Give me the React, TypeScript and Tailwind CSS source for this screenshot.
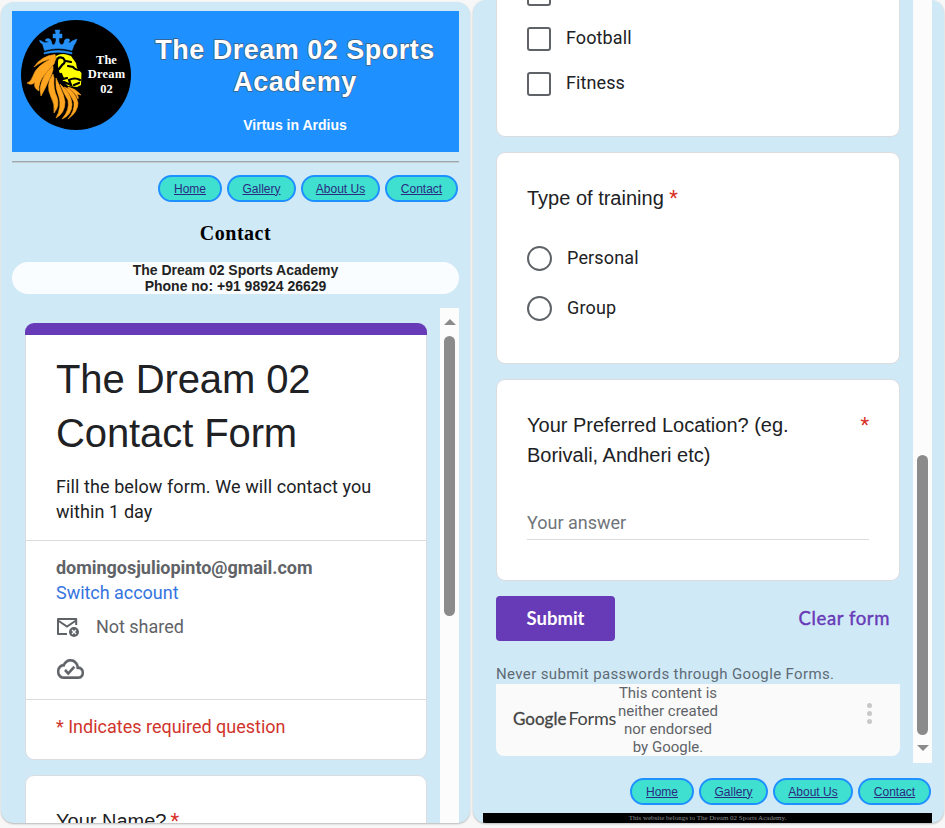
import React from "react";

const ARIAL = "font-['Liberation_Sans',Arial,sans-serif]";

function Logo() {
  return (
    <svg width="110" height="110" viewBox="0 0 110 110" className="block shrink-0">
      <circle cx="55" cy="55" r="55" fill="#000" />
      <g fill="#2490f8" stroke="#2490f8" strokeWidth="0.500">
        <path d="M23.500 30.500 L21.500 24 Q19 23 18.500 20.500 Q20 20 22 22 Q26 24 28 21 Q23 22 25 19 Q30 17 31 24 Q33 27 35 21 L35 18 L32 18 L32 14 L35 14 L34 10 L39 10 L38 14 L41 14 L41 18 L38 18 L38 22 Q40 27 43 23 Q43 18 48 19 Q50 21 47 22 Q49 24 51 21 L56 19 Q55 23 53 25 L51 30.500 Q37 26.500 23.500 30.500 Z" />
        <path d="M23 32.500 Q37 28.500 51 32.500 L51 34 Q37 30.500 23 34 Z" />
      </g>
      <g fill="#ffa51f" stroke="#ffa51f" strokeWidth="0.600">
        <path d="M34 34.500 Q20 36 13 47 Q22 40 30 39 Q15 46 12 56 Q10 62 6 63 Q11 66 14 62 Q12 68 18 71 Q17 62 24 54 Q29 48 33 44 L35 38 Z" />
        <path d="M32 46 Q23 54 21 61 Q18 68 20 76 Q25 67 28 60 Q31 54 32 50 Z" />
        <path d="M32 54 Q24 65 30 77 Q34 84 33 93 Q39 86 36 77 Q32 69 33 58 Z" />
        <path d="M35 58 Q34 68 38 77 Q41 87 35 98 Q44 93 44 82 Q43 75 40 69 Z" />
        <path d="M39 64 Q43 74 47 80 Q49 90 41 99 Q51 95 51 84 Q50 75 44 69 Z" />
        <path d="M43 67 Q50 75 53 82 Q54 91 47 99 Q57 92 57 83 Q55 74 48 69 Z" />
        <path d="M47 68 Q55 73 57 79 Q58 77 56 74 L60 75 Q54 68 47 67 Z" />
      </g>
      <path d="M35 36 Q41 32 50 36 L55 43 L56 48 L60.500 53 L60 65 L56 67 L47 66 L42 61 L38 51 Z" fill="#ff0" />
      <g fill="none" stroke="#000" strokeWidth="2.200" strokeLinecap="round">
        <path d="M36 45 Q35 35 42 38 Q46 42 41 45 L38 49" />
        <path d="M45 41 L50 42 M47 46 L52 47 Q54 50 59 50 M40 54 L42 59 L46 58 M43 62 L50 65 L48 60 Q54 57 59 60 M53 65 L58 63" />
      </g>
      <g fill="#fff" textAnchor="middle" fontFamily="'Liberation Serif', serif" fontWeight="700" fontSize="12.500">
        <text x="85.500" y="43.500">The</text>
        <text x="85.500" y="58" textLength="37.500">Dream</text>
        <text x="85.500" y="73">02</text>
      </g>
    </svg>
  );
}

function Nav({ about }: { about: string }) {
  const pill =
    "flex h-[27px] items-center justify-center rounded-full border-2 border-[#1e90ff] bg-[#40e0d0] text-[12px] leading-none text-[#2b2b80] underline";
  return (
    <nav className={`flex gap-[5px] ${ARIAL}`}>
      <a className={`${pill} w-[64px]`}>Home</a>
      <a className={`${pill} w-[69px]`}>Gallery</a>
      <a className={`${pill} ${about}`}>About Us</a>
      <a className={`${pill} w-[73px]`}>Contact</a>
    </nav>
  );
}

function MailOff() {
  return (
    <svg width="24" height="20" viewBox="0 0 24 20" className="block shrink-0">
      <path d="M11 17H2V1.900H20.200V8" fill="none" stroke="#5f6368" strokeWidth="2" strokeLinejoin="round" />
      <path d="M2 3.500L11 9.500L20 3.500" fill="none" stroke="#5f6368" strokeWidth="2" />
      <circle cx="18" cy="15" r="5" fill="#5f6368" />
      <path d="M16 13L20 17M20 13L16 17" stroke="#fff" strokeWidth="1.300" />
    </svg>
  );
}

function CloudDone() {
  return (
    <svg width="27" height="20" viewBox="0 4 24 16" preserveAspectRatio="none" className="block">
      <path
        fill="#5f6368"
        stroke="#5f6368"
        strokeWidth="0.300"
        d="M19.350 10.040C18.670 6.590 15.640 4 12 4 9.110 4 6.600 5.640 5.350 8.040 2.340 8.360 0 10.910 0 14c0 3.310 2.690 6 6 6h13c2.760 0 5-2.240 5-5 0-2.640-2.050-4.780-4.650-4.960zM19 18H6c-2.210 0-4-1.790-4-4s1.790-4 4-4h.71C7.370 7.690 9.480 6 12 6c3.040 0 5.500 2.460 5.500 5.500v.5H19c1.660 0 3 1.340 3 3s-1.340 3-3 3zm-9-3.820l-2.090-2.090L6.500 13.500 10 17l6.010-6.010-1.410-1.410z"
      />
    </svg>
  );
}

function LeftPhone() {
  return (
    <section className="mt-[2px] h-[821px] w-[469px] overflow-hidden rounded-[13px] bg-[#d0e9f7] pt-[9px] pl-[11px] shadow-[0_1px_2px_rgba(0,0,0,0.25)]">
      <div className="w-[447px]">
        <header className="flex h-[141px] bg-[#1e90ff] pt-[9px] pl-[9px]">
          <Logo />
          <div className={`ml-[10px] w-[308px] pt-[14px] text-center font-bold text-white ${ARIAL}`}>
            <h1 className="text-[27px] leading-[32px] tracking-[0.5px] [-webkit-text-stroke:1.4px_#3d5f80] [paint-order:stroke_fill]">
              The Dream 02 Sports
              <br />
              Academy
            </h1>
            <p className="mt-[19px] text-[14px] leading-[16px]">Virtus in Ardius</p>
          </div>
        </header>
        <div className="mt-[9px] h-[2px] border-t border-b border-t-[#a0a7ab] border-b-[#c4cdd2]" />
        <div className="mt-[12px] flex justify-end pr-[1px]">
          <Nav about="w-[79px]" />
        </div>
        <h2 className="mt-[19px] text-center font-['Liberation_Serif',serif] text-[20px] leading-[24px] font-bold tracking-[0.5px] text-black">
          Contact
        </h2>
        <div
          className={`mt-[17px] h-[32px] rounded-full bg-[#fafdff] text-center text-[14px] leading-[16px] font-bold text-[#222] ${ARIAL}`}
        >
          The Dream 02 Sports Academy
          <br />
          Phone no: +91 98924 26629
        </div>
        <div className="mt-[14px] flex h-[515px] justify-between pl-[13px]">
          <div className="w-[402px] pt-[15px] font-[Roboto,sans-serif]">
            <div className="h-[12px] rounded-t-[9px] bg-[#673ab7]" />
            <div className="h-[425px] rounded-b-[9px] border border-t-0 border-[#dadce0] bg-white pt-[17px]">
              <h1 className={`pl-[30px] text-[40px] leading-[54px] tracking-[-0.1px] text-[#202124] ${ARIAL}`}>
                The Dream 02
                <br />
                Contact Form
              </h1>
              <p className="mt-[14px] pl-[30px] text-[18px] leading-[25px] tracking-[0.09px] text-[#202124]">
                Fill the below form. We will contact you
                <br />
                within 1 day
              </p>
              <div className="mt-[16px] h-[160px] border-y border-[#dadce0] pt-[14px] pl-[30px] text-[18px] leading-[25px] tracking-[-0.03px] text-[#5f6368]">
                <div className="font-bold">domingosjuliopinto@gmail.com</div>
                <div className="text-[#3674e0]">Switch account</div>
                <div className="mt-[9px] flex items-center">
                  <MailOff />
                  <span className="ml-[16px]">Not shared</span>
                </div>
                <div className="mt-[20px] pl-px">
                  <CloudDone />
                </div>
              </div>
              <p className="pt-[14px] pl-[30px] text-[18px] leading-[25px] text-[#d0342c]">* Indicates required question</p>
            </div>
            <div className="mt-[15px] h-[100px] rounded-[9px] border border-[#dadce0] bg-white pt-[32px] pl-[30px] text-[20px] leading-[26px] text-[#202124]">
              <span className={ARIAL}>Your Name?</span> <span className="-ml-px text-[#d93025]">*</span>
            </div>
          </div>
          <div className="flex w-[19px] flex-col items-center bg-[#fcfcfc] pt-[11px]">
            <div className="border-x-[6px] border-b-[6px] border-x-transparent border-b-[#8b8b8b]" />
            <div className="mt-[11px] h-[280px] w-[11px] rounded-full bg-[#8b8b8b]" />
          </div>
        </div>
      </div>
    </section>
  );
}

function Check({ label }: { label?: string }) {
  return (
    <div className="flex h-[45px] items-center">
      <span className="h-[24px] w-[24px] rounded-[3px] border-2 border-[#5f6368]" />
      {label && <span className="-mt-[3px] ml-[15px] tracking-[0.1px]">{label}</span>}
    </div>
  );
}

function Radio({ label }: { label: string }) {
  return (
    <div className="flex h-[50px] items-center">
      <span className="h-[25px] w-[25px] rounded-full border-2 border-[#5f6368]" />
      <span className="-mt-[2px] ml-[15px] tracking-[0.15px]">{label}</span>
    </div>
  );
}

function RightPhone() {
  const card = "rounded-[9px] border border-[#dadce0] bg-white pl-[30px]";
  return (
    <section className="h-[823px] w-[471px] overflow-hidden rounded-[13px] bg-[#d0e9f7] pl-[10px] shadow-[0_1px_2px_rgba(0,0,0,0.25)]">
      <div className="w-[449px]">
        <div className="flex h-[763px] justify-between overflow-hidden pl-[13px]">
          <div className="w-[404px] font-[Roboto,sans-serif] text-[18px] leading-[25px] text-[#202124]">
            <div className={`-mt-[30px] h-[167px] ${card}`}>
              <Check />
              <Check label="Football" />
              <Check label="Fitness" />
            </div>
            <div className={`mt-[15px] h-[212px] pt-[32px] ${card}`}>
              <div className={`text-[20px] leading-[26px] ${ARIAL}`}>
                Type of training <span className="font-[Roboto] text-[#d93025]">*</span>
              </div>
              <div className="mt-[22px]">
                <Radio label="Personal" />
                <Radio label="Group" />
              </div>
            </div>
            <div className={`mt-[15px] h-[202px] pt-[30px] pr-[30px] ${card}`}>
              <div className={`flex justify-between text-[20px] leading-[30px] ${ARIAL}`}>
                <span>
                  Your Preferred Location? (eg.
                  <br />
                  Borivali, Andheri etc)
                </span>
                <span className="font-[Roboto] text-[#d93025]">*</span>
              </div>
              <div className="mt-[34px] h-[36px] border-b border-[#dadce0] pt-[6px] text-[#70757a]">Your answer</div>
            </div>
            <div className="mt-[15px] flex h-[45px] items-center justify-between pr-[10px] font-['Lato',sans-serif] text-[18.500px]">
              <button className="h-[45px] w-[119px] rounded-[4px] bg-[#673ab7] pb-px font-bold text-white">
                Submit
              </button>
              <span className="pb-px font-normal tracking-[0.6px] text-[#673ab7] [-webkit-text-stroke:0.4px_#673ab7]">
                Clear form
              </span>
            </div>
            <p className="mt-[24px] text-[15px] leading-[18px] tracking-[0.37px] text-[#5f6b74]">
              Never submit passwords through Google Forms.
            </p>
            <div className="mt-px flex h-[72px] items-center rounded-b-[8px] bg-[#fafafa] pl-[17px] text-[#5f6368]">
              <div className="mb-[4px] flex w-[103px] items-baseline font-['Lato',sans-serif] text-[17px] leading-[20px] text-[#444]">
                <span className="[-webkit-text-stroke:0.3px_#444]">Google</span>
                <span className="ml-[2px] text-[18px] tracking-[-0.2px]">Forms</span>
              </div>
              <p className="w-[104px] text-center text-[15px] leading-[18px]">
                This content is
                <br />
                neither created
                <br />
                nor endorsed
                <br />
                by Google.
              </p>
              <div className="mb-[14px] ml-[147px] flex flex-col gap-[3px]">
                <i className="h-[5px] w-[5px] rounded-full bg-[#c8c8c8]" />
                <i className="h-[5px] w-[5px] rounded-full bg-[#c8c8c8]" />
                <i className="h-[5px] w-[5px] rounded-full bg-[#c8c8c8]" />
              </div>
            </div>
          </div>
          <div className="flex w-[19px] flex-col items-center bg-[#fcfcfc] pt-[455px]">
            <div className="h-[280px] w-[11px] rounded-full bg-[#8b8b8b]" />
            <div className="mt-[10px] border-x-[6px] border-t-[6px] border-x-transparent border-t-[#8b8b8b]" />
          </div>
        </div>
        <div className="mt-[15px] flex justify-end pr-[1px]">
          <Nav about="w-[80px]" />
        </div>
        <footer className="mt-[8px] h-[10px] bg-black text-center font-['Liberation_Serif',serif] text-[7px] leading-[11px] text-[#8d8d8d]">
          This website belongs to The Dream 02 Sports Academy.
        </footer>
      </div>
    </section>
  );
}

export default function App() {
  return (
    <main className="flex h-[828px] w-[945px] gap-[3px] overflow-hidden bg-[#f7f7f7] pl-px">
      <LeftPhone />
      <RightPhone />
    </main>
  );
}
